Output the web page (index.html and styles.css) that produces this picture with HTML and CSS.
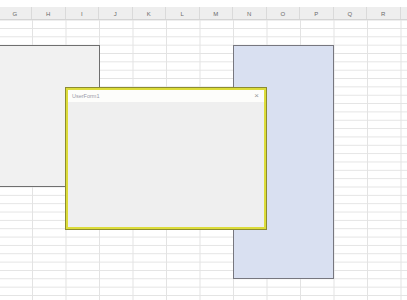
FILE: index.html
```html
<!DOCTYPE html>
<html>
<head>
<meta charset="utf-8">
<link rel="stylesheet" href="styles.css">
</head>
<body>
<div class="top"></div>
<div class="header">
  <div class="col">G</div><div class="col">H</div><div class="col">I</div><div class="col">J</div>
  <div class="col">K</div><div class="col">L</div><div class="col">M</div><div class="col">N</div>
  <div class="col">O</div><div class="col">P</div><div class="col">Q</div><div class="col">R</div>
</div>
<div class="sheet">
  <div class="shape gray"></div>
  <div class="shape blue"></div>
  <div class="form">
    <div class="titlebar"><span class="title">UserForm1</span><span class="close">×</span></div>
    <div class="formbody"></div>
  </div>
</div>
</body>
</html>
```
FILE: styles.css
```css
html, body {
  margin: 0;
  padding: 0;
  background: #ffffff;
  width: 407px;
  height: 300px;
  overflow: hidden;
  font-family: "Liberation Sans", Arial, sans-serif;
}
.top {
  height: 7px;
  background: #ffffff;
}
.header {
  height: 13px;
  background: #eeeeee;
  border-bottom: 1px solid #d4d4d4;
  box-sizing: border-box;
  display: flex;
  margin-left: -1.5px;
}
.col {
  flex: 0 0 33.5px;
  box-sizing: border-box;
  border-right: 1px solid #dadada;
  font-size: 6px;
  color: #6a6a6a;
  text-align: center;
  line-height: 14px;
}
.sheet {
  position: relative;
  height: 280px;
  background-image:
    linear-gradient(to right, #e3e3e3 1px, transparent 1px),
    linear-gradient(to bottom, #e3e3e3 1px, transparent 1px);
  background-size: 33.5px 100%, 100% 8.35px;
  background-position: 32px 0, 0 8px;
}
.shape {
  position: absolute;
  box-sizing: border-box;
}
.gray {
  left: -2px;
  top: 25px;
  width: 102px;
  height: 142px;
  background: #f1f1f1;
  border: 1px solid #6f6f6f;
}
.blue {
  left: 233px;
  top: 25px;
  width: 101px;
  height: 234px;
  background: #d9e0f1;
  border: 1px solid #77777f;
}
.form {
  position: absolute;
  left: 65px;
  top: 67px;
  width: 202px;
  height: 143px;
  box-sizing: border-box;
  border: 3px solid #dcdc3a;
  outline: 1px solid #8c8c30;
  outline-offset: -1px;
  display: flex;
  flex-direction: column;
  background: #efefef;
}
.titlebar {
  height: 12px;
  background: #fdfdfb;
  display: flex;
  align-items: center;
  justify-content: space-between;
  padding: 0 5px 0 4px;
}
.title {
  font-size: 5.5px;
  color: #9a9aa8;
}
.close {
  font-size: 8px;
  color: #9a9a9a;
  line-height: 8px;
}
.formbody {
  flex: 1;
  background: #efefef;
}
```
